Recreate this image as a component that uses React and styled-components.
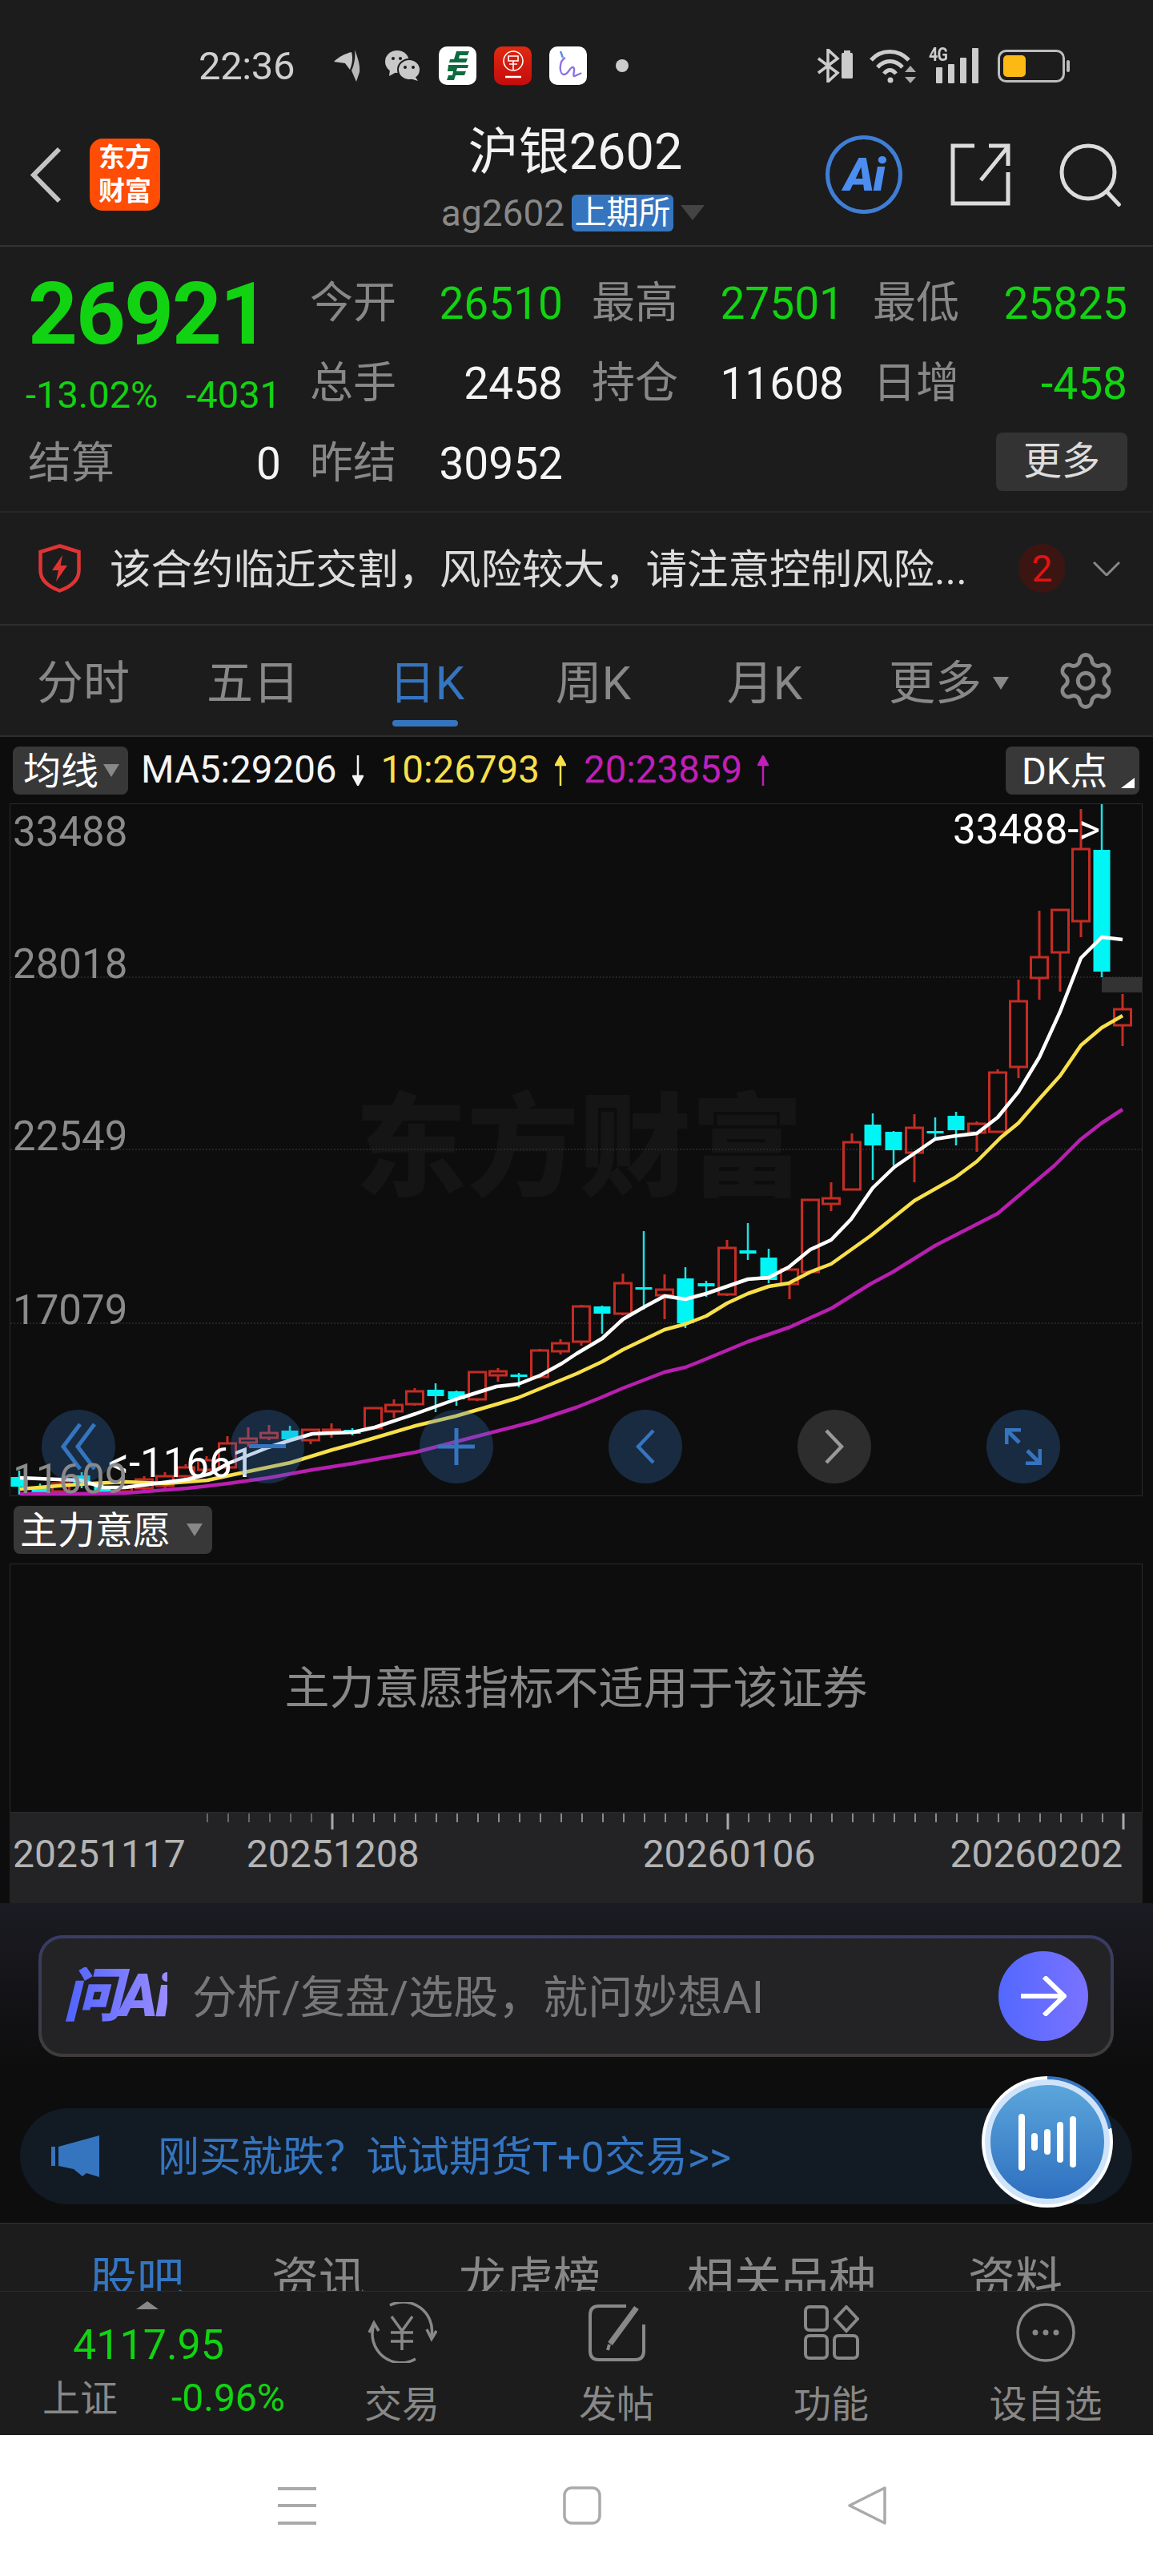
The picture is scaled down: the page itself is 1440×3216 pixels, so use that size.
import React from "react";
import styled, { createGlobalStyle } from "styled-components";
import { Settings } from "lucide-react";

const FONT = `Roboto, "Noto Sans CJK SC", sans-serif`;
const BLUE = "#3575c0";
const GREEN = "#12d312";
const GRAY = "#888888";

const Global = createGlobalStyle`
  * { box-sizing: border-box; }
  html, body { margin: 0; padding: 0; background: #1c1c1c; }
  #root { width: 1440px; height: 3216px; overflow: hidden; }
`;

const Page = styled.div`
  width: 1440px; height: 3216px; display: flex; flex-direction: column;
  background: #1c1c1c; font-family: ${FONT}; color: #fff; line-height: 1; overflow: hidden;
`;

/* ---------- status bar ---------- */
const StatusBar = styled.div`
  height: 130px; flex: none; display: flex; align-items: center;
  padding: 34px 103px 0 248px;
`;
const Time = styled.span`font-size: 49px; color: #cfcfcf; width: 119px; white-space: nowrap; margin-right: 50px; letter-spacing: -.4px;`;
const StatusGroup = styled.div`
  display: flex; align-items: center; gap: ${p => p.$gap}px;
  margin-left: ${p => p.$ml || 0}px;
`;
const AppTile = styled.div`
  width: 47px; height: 48px; border-radius: 10px; background: ${p => p.$bg};
  display: flex; align-items: center; justify-content: center; overflow: hidden;
`;
const Dot = styled.span`width: 16px; height: 16px; border-radius: 50%; background: #ccc; margin-left: 14px;`;
const NetBlock = styled.div`position: relative; width: 61px; height: 44px;`;
const NetLabel = styled.span`
  position: absolute; left: -5px; top: -4px; font-size: 24px; font-weight: 700; color: #ccc;
  letter-spacing: -1px; transform: scaleX(.82); transform-origin: left top;
`;

/* ---------- header ---------- */
const Header = styled.div`
  height: 178px; flex: none; display: grid; grid-template-columns: 1fr auto 1fr;
  align-items: center; padding: 0 40px 0 37px; border-bottom: 2px solid #333;
`;
const HeaderLeft = styled.div`display: flex; align-items: center; gap: 34px;`;
const Logo = styled.div`
  width: 88px; height: 90px; border-radius: 16px; background: #ff4d06; color: #fff;
  display: flex; align-items: center; justify-content: center; text-align: center;
  font-size: 33px; font-weight: 700; line-height: 42px;
`;
const HeaderCenter = styled.div`display: flex; flex-direction: column; align-items: center; gap: 22px; padding-top: 10px;`;
const Title = styled.div`font-size: 63px; color: #f2f2f2; white-space: nowrap;`;
const SubRow = styled.div`display: flex; align-items: center; gap: 9px; margin-left: -6px;`;
const SubCode = styled.span`font-size: 46px; color: ${GRAY};`;
const ExchangeBadge = styled.span`
  width: 127px; height: 46px; border-radius: 6px; background: ${BLUE}; color: #fff;
  font-size: 40px; display: flex; align-items: center; justify-content: center;
`;
const Caret = styled.span`
  display: inline-block; flex: none; width: 0; height: 0;
  border-left: ${p => p.$w / 2}px solid transparent; border-right: ${p => p.$w / 2}px solid transparent;
  border-top: ${p => p.$h}px solid ${p => p.$color || GRAY};
`;
const HeaderRight = styled.div`display: flex; align-items: center; justify-content: flex-end; gap: 60px;`;
const AiCircle = styled.div`
  width: 96px; height: 98px; border-radius: 50%; border: 5px solid #3f7ed6; color: #4b8df0;
  display: flex; align-items: center; justify-content: center;
  font-size: 58px; font-weight: 900; font-style: italic; letter-spacing: -2px;
`;

/* ---------- quote ---------- */
const Quote = styled.div`
  height: 332px; flex: none; display: grid; padding: 21px 0 0 35px;
  grid-template-columns: 316px 316px 315px 318px; column-gap: 36px; grid-auto-rows: 100px;
  border-bottom: 2px solid #262626;
`;
const PriceCell = styled.div`
  display: flex; align-items: center; padding-top: 26px; font-size: 108px; font-weight: 700;
  color: ${GREEN}; letter-spacing: -2px; white-space: nowrap;
`;
const ChangeCell = styled.div`
  display: flex; align-items: center; justify-content: space-between; padding-top: 26px; margin-left: -3px;
  font-size: 47px; color: ${GREEN}; white-space: nowrap;
`;
const StatCell = styled.div`display: flex; align-items: center; justify-content: space-between; white-space: nowrap;`;
const StatLabel = styled.span`font-size: 54px; color: ${GRAY};`;
const StatValue = styled.span`font-size: 55px; color: ${p => p.$color || "#f4f4f4"};`;
const MoreCell = styled.div`grid-column: 4; display: flex; align-items: center; justify-content: flex-end;`;
const MoreButton = styled.div`
  width: 164px; height: 73px; border-radius: 8px; background: #333; color: #ddd; font-size: 48px;
  display: flex; align-items: center; justify-content: center; margin-top: -6px;
`;

/* ---------- alert ---------- */
const Alert = styled.div`
  height: 141px; flex: none; display: flex; align-items: center; padding: 0 41px 0 48px;
  border-bottom: 2px solid #2e2e2e;
`;
const AlertText = styled.span`font-size: 51.5px; color: #ddd; margin: 4px 0 0 36px; white-space: nowrap;`;
const AlertBadge = styled.span`
  width: 59px; height: 61px; border-radius: 50%; background: #3b1512; color: #e31212; font-size: 46px;
  display: flex; align-items: center; justify-content: center; margin-left: auto;
`;
const AlertChevron = styled.svg`margin-left: 34px;`;

/* ---------- period tabs ---------- */
const Tabs = styled.div`
  height: 139px; flex: none; display: grid; align-items: stretch;
  grid-template-columns: 208px 216px 218px 198px 230px 196px 174px; border-bottom: 2px solid #2e2e2e;
`;
const Tab = styled.div`
  position: relative; display: flex; align-items: center; justify-content: center; gap: 14px; padding-top: 6px;
  font-size: 58px; color: ${p => (p.$active ? BLUE : GRAY)};
  ${p => p.$active && `&::after {
    content: ""; position: absolute; bottom: 11px; left: 66px; width: 82px; height: 8px;
    border-radius: 4px; background: ${BLUE};
  }`}
`;
const MoreTab = styled(Tab)`justify-content: flex-start; padding-left: 40px;`;
const GearSlot = styled.div`display: flex; align-items: center; justify-content: flex-start; padding-left: 51px;`;

/* ---------- chart ---------- */
const ChartArea = styled.div`flex: none; background: #0d0d0d; display: flex; flex-direction: column;`;
const ChartToolbar = styled.div`
  height: ${p => p.$h}px; display: flex; align-items: flex-start; padding: 12px 17px 0 ${p => p.$pl}px;
`;
const Pill = styled.div`
  position: relative; height: 60px; border-radius: 8px; background: #383838; color: #fff; font-size: 47px;
  display: flex; align-items: center; gap: ${p => p.$gap || 6}px; padding: 0 0 0 ${p => p.$pl || 13}px; width: ${p => p.$w}px; flex: none;
`;
const PillCorner = styled.span`
  position: absolute; right: 6px; bottom: 8px; width: 0; height: 0;
  border-left: 17px solid transparent; border-bottom: 13px solid #fff;
`;
const Legend = styled.div`display: flex; align-items: center; gap: 22px; margin-left: 16px; height: 60px; flex: 1;`;
const LegendItem = styled.span`
  display: flex; align-items: center; gap: 19px; font-size: 47.5px; color: ${p => p.$color}; white-space: nowrap;
`;
const ChartBox = styled.div`
  position: relative; height: ${p => p.$h}px; margin: 0 13px 0 12px; border: 1px solid #2a2a2a;
  overflow: ${p => (p.$clip ? "hidden" : "visible")};
`;
const ChartSvg = styled.svg`position: relative; display: block;`;
const Watermark = styled.div`
  position: absolute; left: 430px; top: 360px; font-size: 140px; font-weight: 900; color: #151515; white-space: nowrap;
`;
const AxisLabel = styled.span`
  position: absolute; left: 3px; top: ${p => p.$top}px; font-size: 51px; color: #8a8a8a;
`;
const PriceMark = styled.span`
  position: absolute; left: ${p => p.$left}px; top: ${p => p.$top}px; font-size: 51px; color: #fff; white-space: nowrap;
`;
const OverlayButtons = styled.div`position: absolute; left: 39px; top: 756px; display: flex; gap: 144px;`;
const RoundButton = styled.div`
  width: 92px; height: 92px; border-radius: 50%; display: flex; align-items: center; justify-content: center;
  background: ${p => (p.$gray ? "rgba(128,128,128,.28)" : "rgba(53,117,192,.29)")};
`;
const EmptyBox = styled(ChartBox)`display: flex; align-items: center; justify-content: center; font-size: 56px; color: ${GRAY};`;
const DateStrip = styled.div`height: 113px; margin: 0 13px 0 12px; background: #232325;`;
const TickSvg = styled.svg`display: block;`;
const DateRow = styled.div`display: flex; margin-top: 4px;`;
const DateLabel = styled.span`font-size: 48px; color: #b4b4b4; margin-left: ${p => p.$ml}px; white-space: nowrap;`;

/* ---------- AI area ---------- */
const AiArea = styled.div`
  position: relative; height: 399px; flex: none; padding-top: 40px;
  background: linear-gradient(180deg, #1b1b23 0%, #0d0d0d 52%, #0d0d0d 100%);
`;
const AskBar = styled.div`
  height: 152px; margin: 0 49px 0 48px; border: 4px solid transparent; border-radius: 30px;
  background: linear-gradient(#232326, #232326) padding-box, linear-gradient(180deg, #383c66, #403c3c) border-box;
  display: flex; align-items: center; padding: 0 28px 0 27px;
`;
const AskLogo = styled.span`
  width: 130px; flex: none; font-size: 73px; font-weight: 900; font-style: italic; letter-spacing: -3px; white-space: nowrap;
  background: linear-gradient(90deg, #4f63ff, #9a8cff); -webkit-background-clip: text; background-clip: text; color: transparent;
`;
const AskText = styled.span`font-size: 56px; color: #777; margin: 4px 0 0 31px; white-space: nowrap; flex: 1;`;
const SendButton = styled.div`
  width: 112px; height: 112px; border-radius: 50%; flex: none;
  background: linear-gradient(90deg, #5368ff, #7a72ff); display: flex; align-items: center; justify-content: center;
`;
const Promo = styled.div`
  height: 120px; margin: 64px 26px 0 25px; border-radius: 60px; background: #121a24;
  display: flex; align-items: center; padding-left: 39px;
`;
const PromoText = styled.span`font-size: 52px; color: ${BLUE}; margin: 4px 0 0 73px; white-space: nowrap;`;
const VoiceOuter = styled.div`
  position: absolute; right: 50px; top: 216px; width: 164px; height: 164px; border-radius: 50%; padding: 4px;
  background: conic-gradient(${BLUE} 0deg 78deg, #fff 78deg 360deg);
`;
const VoiceInner = styled.div`
  width: 100%; height: 100%; border-radius: 50%; border: 7px solid #cfe4fa;
  background: linear-gradient(180deg, #5ba6dc, #2e6fbf);
  display: flex; align-items: center; justify-content: center; gap: 8px;
`;
const VoiceBar = styled.span`width: 8px; height: ${p => p.$h}px; border-radius: 4px; background: #fff;`;

/* ---------- bottom ---------- */
const SectionTabs = styled.div`
  height: 85px; flex: none; overflow: hidden; border-top: 1px solid #333; background: #1c1c1c;
  display: flex; padding: 41px 0 0 112px; font-size: 59px; color: ${GRAY};
`;
const SectionTab = styled.span`
  color: ${p => (p.$active ? BLUE : GRAY)}; white-space: nowrap; margin-left: ${p => p.$ml || 0}px;
`;
const BottomNav = styled.div`
  height: 180px; flex: none; border-top: 1px solid #2c2c2c; display: grid;
  grid-template-columns: 368px repeat(4, 268px);
`;
const IndexCell = styled.div`display: flex; flex-direction: column; padding: 12px 12px 0 53px;`;
const UpCaret = styled.span`
  width: 0; height: 0; align-self: flex-start; margin-left: 117px;
  border-left: 14px solid transparent; border-right: 14px solid transparent; border-bottom: 10px solid ${GRAY};
`;
const IndexPrice = styled.div`font-size: 52px; color: ${GREEN}; margin: 19px 0 0 38px; white-space: nowrap;`;
const IndexRow = styled.div`display: flex; align-items: center; justify-content: space-between; margin-top: 16px;`;
const IndexName = styled.span`font-size: 47px; color: ${GRAY};`;
const IndexChange = styled.span`font-size: 48px; color: ${GREEN};`;
const NavItem = styled.div`display: flex; flex-direction: column; align-items: center; padding-top: 12px;`;
const NavIconBox = styled.div`height: 78px; display: flex; align-items: center; justify-content: center;`;
const NavLabel = styled.span`font-size: 47px; color: ${GRAY}; margin-top: 27px; white-space: nowrap;`;
const SystemNav = styled.div`
  height: 176px; flex: none; background: #fff; display: flex; align-items: center; gap: 308px; padding-left: 347px;
`;

/* ---------- data ---------- */
const R = "r", C = "c";
const candles = [
  [24, 1836, 1866, 1844, 1855, C], [50, 1852, 1866, 1857, 1863, C], [76, 1846, 1866, 1852, 1862, R],
  [102, 1838, 1858, 1842, 1852, C], [128, 1850, 1866, 1855, 1862, C], [154, 1853, 1866, 1857, 1862, R],
  [180, 1843, 1861, 1847, 1858, R], [206, 1838, 1858, 1843, 1855, R], [232, 1828, 1846, 1832, 1843, R],
  [258, 1818, 1838, 1823, 1835, R], [284, 1793, 1836, 1802, 1832, R], [310, 1782, 1806, 1796, 1801, R],
  [336, 1779, 1798, 1789, 1795, R], [362, 1780, 1800, 1786, 1796, C], [388, 1785, 1803, 1785, 1798, R],
  [414, 1777, 1795, 1785, 1788, R], [440, 1783, 1792, 1785, 1789, C], [466, 1757, 1785, 1758, 1783, R],
  [492, 1747, 1770, 1754, 1762, R], [518, 1733, 1755, 1737, 1753, R], [544, 1727, 1763, 1735, 1742, C],
  [570, 1736, 1755, 1737, 1746, C], [596, 1712, 1749, 1713, 1747, R], [622, 1708, 1725, 1712, 1717, R],
  [648, 1714, 1732, 1716, 1718, C], [674, 1684, 1721, 1686, 1719, R], [700, 1672, 1691, 1677, 1687, R],
  [726, 1629, 1680, 1631, 1675, R], [752, 1630, 1665, 1631, 1639, C], [778, 1590, 1642, 1602, 1640, R],
  [804, 1537, 1635, 1607, 1609, C], [830, 1591, 1647, 1610, 1617, R], [856, 1582, 1658, 1596, 1651, C],
  [882, 1599, 1619, 1602, 1605, C], [908, 1548, 1618, 1558, 1616, R], [934, 1527, 1573, 1561, 1564, C],
  [960, 1559, 1602, 1570, 1597, C], [986, 1585, 1622, 1585, 1603, R], [1012, 1497, 1589, 1498, 1588, R],
  [1038, 1476, 1512, 1496, 1503, R], [1064, 1415, 1486, 1426, 1485, R], [1090, 1390, 1473, 1404, 1429, C],
  [1116, 1412, 1455, 1413, 1435, C], [1142, 1391, 1476, 1408, 1439, R], [1168, 1395, 1422, 1412, 1414, C],
  [1194, 1388, 1430, 1393, 1410, C], [1220, 1400, 1438, 1403, 1414, R], [1246, 1335, 1414, 1339, 1413, R],
  [1272, 1223, 1346, 1250, 1332, R], [1298, 1137, 1248, 1195, 1221, R], [1324, 1136, 1238, 1136, 1189, R],
  [1350, 1010, 1170, 1060, 1150, R], [1376, 1004, 1220, 1061, 1212, C], [1402, 1241, 1306, 1260, 1280, R],
];
const white = "25,1845 73,1847 101,1848 129,1857 156,1857 234,1847 262,1840 285,1827 335,1807 363,1798 390,1790 441,1788 468,1782 519,1765 569,1747 620,1731 647,1728 675,1717 702,1702 720,1690 752,1671 778,1647 804,1632 830,1618 856,1622 882,1615 908,1606 934,1597 960,1595 985,1582 1012,1560 1038,1548 1063,1522 1090,1483 1117,1457 1168,1422 1194,1418 1220,1415 1246,1395 1272,1363 1298,1320 1324,1263 1350,1196 1376,1170 1402,1173";
const yellow = "25,1859 73,1855 115,1852 156,1850 207,1852 259,1848 310,1837 363,1826 415,1810 441,1803 519,1780 569,1768 624,1752 647,1745 720,1715 752,1700 778,1685 830,1660 856,1653 882,1643 908,1627 934,1615 960,1606 985,1602 1012,1588 1038,1578 1087,1543 1142,1499 1193,1470 1220,1450 1250,1420 1272,1402 1298,1372 1324,1343 1350,1305 1376,1283 1402,1268";
const magenta = "25,1865 92,1865 156,1864 234,1858 285,1852 335,1845 390,1835 441,1827 491,1818 519,1813 569,1800 666,1775 720,1757 750,1745 778,1733 830,1713 856,1707 881,1697 934,1675 986,1657 1039,1633 1087,1603 1115,1588 1168,1555 1246,1515 1317,1455 1349,1423 1376,1402 1402,1385";

/* ---------- drawings ---------- */
const LegendArrow = ({ color, down }) => (
  <svg width="14" height="38" viewBox="0 0 14 38">
    {down ? (
      <path d="M7 0V36M1 26L7 37L13 26Z" stroke={color} strokeWidth="2.5" fill={color} />
    ) : (
      <path d="M7 38V2M1 12L7 1L13 12Z" stroke={color} strokeWidth="2.5" fill={color} />
    )}
  </svg>
);

const Chart = () => (
  <ChartSvg width="1413" height="863" viewBox="13 1004 1413 863">
    {[1220, 1435, 1652].map(y => (
      <line key={y} x1="13" x2="1426" y1={y} y2={y} stroke="#2c2c2c" strokeWidth="1.5" strokeDasharray="2 2" />
    ))}
    <rect x="1376" y="1220" width="51" height="19" fill="#333" />
    {candles.map(([x, hi, lo, top, bot, kind]) =>
      kind === R ? (
        <g key={x} stroke="#c42c24" strokeWidth="3" fill="none">
          <line x1={x} x2={x} y1={hi} y2={top} />
          <line x1={x} x2={x} y1={bot} y2={lo} />
          <rect x={x - 10.5} y={top} width="21" height={bot - top} />
        </g>
      ) : (
        <g key={x}>
          <line x1={x} x2={x} y1={hi} y2={lo} stroke="#1fe0e0" strokeWidth="2.5" />
          <rect x={x - 10.5} y={top} width="21" height={bot - top + 1} fill="#00f5f5" />
        </g>
      )
    )}
    <polyline points={magenta} fill="none" stroke="#b81fb0" strokeWidth="4.5" strokeLinejoin="round" />
    <polyline points={yellow} fill="none" stroke="#f8e04c" strokeWidth="4.5" strokeLinejoin="round" />
    <polyline points={white} fill="none" stroke="#fff" strokeWidth="4.5" strokeLinejoin="round" />
  </ChartSvg>
);

const Ticks = () => (
  <TickSvg width="1415" height="24" viewBox="12 2263 1415 24">
    {Array.from({ length: 45 }, (_, i) => {
      const x = 259 + 26 * i;
      const long = i === 6 || i === 25 || i === 44;
      return (
        <line key={i} x1={x} x2={x} y1="2264" y2={long ? 2284 : 2275}
          stroke={long ? "#a8a8a8" : i < 6 ? "#666" : "#8a8a8a"} strokeWidth={long ? 3 : 2} />
      );
    })}
  </TickSvg>
);

export default function App() {
  return (
    <Page>
      <Global />
      <StatusBar>
        <Time>22:36</Time>
        <StatusGroup $gap={30}>
          <svg width="33" height="40" viewBox="0 0 33 40">
            <path d="M26 0C30 10 33 20 32 28L28 40L22 26C26 18 27 8 26 0Z" fill="#b8b8b8" />
            <path d="M22 3C24 10 23 18 20 25L14 17L0 15C6 9 14 5 22 3Z" fill="#c8c8c8" />
          </svg>
          <svg width="45" height="38" viewBox="0 0 45 38">
            <ellipse cx="16" cy="14" rx="15" ry="14" fill="#c8c8c8" />
            <path d="M7 24L6 32L15 27Z" fill="#c8c8c8" />
            <ellipse cx="31" cy="24" rx="14" ry="13" fill="#c8c8c8" stroke="#1c1c1c" strokeWidth="2" />
            <path d="M38 32L42 38L32 35Z" fill="#c8c8c8" />
            <circle cx="11" cy="10" r="2" fill="#1c1c1c" /><circle cx="20" cy="10" r="2" fill="#1c1c1c" />
            <circle cx="26" cy="21" r="2" fill="#1c1c1c" /><circle cx="36" cy="21" r="2" fill="#1c1c1c" />
          </svg>
          <StatusGroup $gap={22} $ml={-7}>
            <AppTile $bg="#fff">
              <svg width="28" height="36" viewBox="0 0 28 36" fill="#0d6b3f">
                <path d="M12 0H28L26 5H16L15 9H26L24 14H3L4 10H9ZM2 17H27L26 21H13L12 25H24L22 30H11L9 36H0L2 30H7L8 25H1Z" />
              </svg>
            </AppTile>
            <AppTile $bg="linear-gradient(180deg,#e02a10,#c40c0c)">
              <svg width="30" height="38" viewBox="0 0 30 38" fill="none" stroke="#fff" strokeWidth="1.6">
                <circle cx="15" cy="13" r="12" />
                <path d="M9 7H21V13H9ZM15 13V24M10 17H20" />
                <line x1="5" y1="33" x2="25" y2="33" strokeWidth="2.5" />
              </svg>
            </AppTile>
            <AppTile $bg="#fff">
              <svg width="36" height="40" viewBox="0 0 36 40" fill="none" strokeWidth="2.4">
                <path d="M8 2L11 10" stroke="#5a8ce8" />
                <path d="M14 10C6 14 6 30 12 31C18 32 20 20 24 22C28 25 20 36 28 32C30 31 33 30 34 29" stroke="#8a72e8" />
              </svg>
            </AppTile>
            <Dot />
          </StatusGroup>
        </StatusGroup>
        <StatusGroup $gap={20} $ml={236}>
          <svg width="44" height="42" viewBox="0 0 44 42" fill="none">
            <path d="M1 12L25 30L13 41V1L25 12L1 30" stroke="#ccc" strokeWidth="3.5" />
            <rect x="30" y="5" width="14" height="32" rx="1.5" fill="#ccc" />
            <rect x="33" y="2" width="8" height="4" fill="#ccc" />
          </svg>
          <svg width="60" height="45" viewBox="0 0 60 45" fill="none" stroke="#ccc" strokeWidth="5">
            <path d="M3 15C15 1 37 1 50 15" />
            <path d="M11 24C20 14 33 14 42 24" />
            <path d="M19 32C24 26 29 26 34 32" />
            <circle cx="27" cy="40" r="3.5" fill="#ccc" stroke="none" />
            <path d="M45 30L52 22L59 30ZM45 36L59 36L52 44Z" fill="#aaa" stroke="none" />
          </svg>
          <NetBlock>
            <NetLabel>4G</NetLabel>
            <svg width="61" height="44" viewBox="0 0 61 44" fill="#ccc">
              <rect x="4" y="24" width="8" height="20" rx="1" />
              <rect x="19" y="20" width="8" height="24" rx="1" />
              <rect x="34" y="12" width="8" height="32" rx="1" />
              <rect x="49" y="0" width="8" height="44" rx="1" />
            </svg>
          </NetBlock>
          <svg width="90" height="41" viewBox="0 0 90 41">
            <rect x="1.5" y="1.5" width="81" height="38" rx="9" fill="none" stroke="#bdbdbd" strokeWidth="3" />
            <rect x="7" y="7" width="28" height="27" rx="5" fill="#fdb913" />
            <rect x="86" y="13" width="4" height="15" rx="2" fill="#bdbdbd" />
          </svg>
        </StatusGroup>
      </StatusBar>

      <Header>
        <HeaderLeft>
          <svg width="41" height="71" viewBox="0 0 41 71" fill="none">
            <path d="M37 3L5 35.5L37 68" stroke="#c4c4c4" strokeWidth="6" />
          </svg>
          <Logo>东方<br />财富</Logo>
        </HeaderLeft>
        <HeaderCenter>
          <Title>沪银2602</Title>
          <SubRow>
            <SubCode>ag2602</SubCode>
            <ExchangeBadge>上期所</ExchangeBadge>
            <Caret $w={30} $h={19} $color="#444" />
          </SubRow>
        </HeaderCenter>
        <HeaderRight>
          <AiCircle>Ai</AiCircle>
          <svg width="75" height="78" viewBox="0 0 75 78" fill="none" stroke="#dcdcdc" strokeWidth="5">
            <path d="M30 3H3V75H72V36" />
            <path d="M38 46L72 4M48 3H72V28" />
          </svg>
          <svg width="78" height="79" viewBox="0 0 78 79" fill="none" stroke="#dcdcdc" strokeWidth="5">
            <circle cx="37" cy="36" r="33" />
            <path d="M60 60L77 78" />
          </svg>
        </HeaderRight>
      </Header>

      <Quote>
        <PriceCell>26921</PriceCell>
        <StatCell><StatLabel>今开</StatLabel><StatValue $color={GREEN}>26510</StatValue></StatCell>
        <StatCell><StatLabel>最高</StatLabel><StatValue $color={GREEN}>27501</StatValue></StatCell>
        <StatCell><StatLabel>最低</StatLabel><StatValue $color={GREEN}>25825</StatValue></StatCell>
        <ChangeCell><span>-13.02%</span><span>-4031</span></ChangeCell>
        <StatCell><StatLabel>总手</StatLabel><StatValue>2458</StatValue></StatCell>
        <StatCell><StatLabel>持仓</StatLabel><StatValue>11608</StatValue></StatCell>
        <StatCell><StatLabel>日增</StatLabel><StatValue $color={GREEN}>-458</StatValue></StatCell>
        <StatCell><StatLabel>结算</StatLabel><StatValue>0</StatValue></StatCell>
        <StatCell><StatLabel>昨结</StatLabel><StatValue>30952</StatValue></StatCell>
        <MoreCell><MoreButton>更多</MoreButton></MoreCell>
      </Quote>

      <Alert>
        <svg width="53" height="61" viewBox="0 0 53 61" fill="none">
          <path d="M26.5 2.5L50.5 10V33C50.5 46 39 54 26.5 58.5C14 54 2.5 46 2.5 33V10Z" stroke="#e03434" strokeWidth="4.5" />
          <path d="M30 14L17 33H25L22 47L36 27H27.5Z" fill="#e03434" />
        </svg>
        <AlertText>该合约临近交割，风险较大，请注意控制风险...</AlertText>
        <AlertBadge>2</AlertBadge>
        <AlertChevron width="34" height="18" viewBox="0 0 34 18" fill="none">
          <path d="M1 1L17 17L33 1" stroke="#888" strokeWidth="3" />
        </AlertChevron>
      </Alert>

      <Tabs>
        <Tab>分时</Tab>
        <Tab>五日</Tab>
        <Tab $active>日K</Tab>
        <Tab>周K</Tab>
        <Tab>月K</Tab>
        <MoreTab>更多<Caret $w={20} $h={16} /></MoreTab>
        <GearSlot><Settings size={78} color="#888" strokeWidth={1.5} /></GearSlot>
      </Tabs>

      <ChartArea>
        <ChartToolbar $h={83} $pl={16}>
          <Pill $w={144}>均线<Caret $w={20} $h={16} /></Pill>
          <Legend>
            <LegendItem $color="#f4f4f4">MA5:29206<LegendArrow color="#f4f4f4" down /></LegendItem>
            <LegendItem $color="#f8e04c">10:26793<LegendArrow color="#f8e04c" /></LegendItem>
            <LegendItem $color="#c01fb8">20:23859<LegendArrow color="#c01fb8" /></LegendItem>
          </Legend>
          <Pill $w={167} $pl={20}>DK点<PillCorner /></Pill>
        </ChartToolbar>
        <ChartBox $h={865} $clip>
          <Watermark>东方财富</Watermark>
          <Chart />
          <AxisLabel $top={9}>33488</AxisLabel>
          <AxisLabel $top={174}>28018</AxisLabel>
          <AxisLabel $top={389}>22549</AxisLabel>
          <AxisLabel $top={606}>17079</AxisLabel>
          <PriceMark $left={1177} $top={6}>33488-&gt;</PriceMark>
          <PriceMark $left={122} $top={797}>&lt;-11661</PriceMark>
          <OverlayButtons>
            <RoundButton>
              <svg width="44" height="60" viewBox="0 0 44 60" fill="none" stroke={BLUE} strokeWidth="5">
                <path d="M24 2L3 30L24 58M42 2L21 30L42 58" />
              </svg>
            </RoundButton>
            <RoundButton>
              <svg width="46" height="6" viewBox="0 0 46 6"><rect width="46" height="5" fill={BLUE} /></svg>
            </RoundButton>
            <RoundButton>
              <svg width="46" height="46" viewBox="0 0 46 46" fill={BLUE}><rect y="20.5" width="46" height="5" /><rect x="20.5" width="5" height="46" /></svg>
            </RoundButton>
            <RoundButton>
              <svg width="24" height="44" viewBox="0 0 24 44" fill="none" stroke={BLUE} strokeWidth="4.5"><path d="M22 2L3 22L22 42" /></svg>
            </RoundButton>
            <RoundButton $gray>
              <svg width="24" height="44" viewBox="0 0 24 44" fill="none" stroke="#9a9a9a" strokeWidth="4.5"><path d="M2 2L21 22L2 42" /></svg>
            </RoundButton>
            <RoundButton>
              <svg width="46" height="46" viewBox="0 0 46 46" fill="none" stroke={BLUE} strokeWidth="5">
                <path d="M2 20V2H20M3 3L18 18M44 26V44H26M43 43L28 28" />
              </svg>
            </RoundButton>
          </OverlayButtons>
          <AxisLabel $top={817}>11609</AxisLabel>
        </ChartBox>
        <ChartToolbar $h={84} $pl={17}>
          <Pill $w={248} $gap={20} $pl={8}>主力意愿<Caret $w={20} $h={16} /></Pill>
        </ChartToolbar>
        <EmptyBox $h={311}>主力意愿指标不适用于该证券</EmptyBox>
        <DateStrip>
          <Ticks />
          <DateRow>
            <DateLabel $ml={4}>20251117</DateLabel>
            <DateLabel $ml={76}>20251208</DateLabel>
            <DateLabel $ml={279}>20260106</DateLabel>
            <DateLabel $ml={168}>20260202</DateLabel>
          </DateRow>
        </DateStrip>
      </ChartArea>

      <AiArea>
        <AskBar>
          <AskLogo>问Ai</AskLogo>
          <AskText>分析/复盘/选股，就问妙想AI</AskText>
          <SendButton>
            <svg width="58" height="50" viewBox="0 0 58 50" fill="none" stroke="#fff" strokeWidth="6">
              <path d="M1 25H55M30 1L55 25L30 49" />
            </svg>
          </SendButton>
        </AskBar>
        <Promo>
          <svg width="60" height="52" viewBox="0 0 60 52" fill={BLUE}>
            <rect x="0" y="14" width="5" height="24" />
            <path d="M9 14L60 0V52L44 47L39 51L28 42L9 38Z" />
          </svg>
          <PromoText>刚买就跌？试试期货T+0交易&gt;&gt;</PromoText>
        </Promo>
        <VoiceOuter>
          <VoiceInner>
            <VoiceBar $h={71} />
            <VoiceBar $h={22} />
            <VoiceBar $h={32} />
            <VoiceBar $h={51} />
            <VoiceBar $h={64} />
          </VoiceInner>
        </VoiceOuter>
      </AiArea>

      <SectionTabs>
        <SectionTab $active>股吧</SectionTab>
        <SectionTab $ml={109}>资讯</SectionTab>
        <SectionTab $ml={116}>龙虎榜</SectionTab>
        <SectionTab $ml={108}>相关品种</SectionTab>
        <SectionTab $ml={115}>资料</SectionTab>
      </SectionTabs>

      <BottomNav>
        <IndexCell>
          <UpCaret />
          <IndexPrice>4117.95</IndexPrice>
          <IndexRow><IndexName>上证</IndexName><IndexChange>-0.96%</IndexChange></IndexRow>
        </IndexCell>
        <NavItem>
          <NavIconBox>
            <svg width="87" height="76" viewBox="0 0 87 76" fill="none" stroke="#888" strokeWidth="3.5">
              <path d="M28 4A36 36 0 0 1 80 42" />
              <path d="M74 34L80 46L86 36" />
              <path d="M8 28A36 36 0 0 0 60 71" />
              <path d="M2 38L8 26L14 36" />
              <path d="M30 18L43 36L56 18M43 36V60M29 38H57M29 49H57" />
            </svg>
          </NavIconBox>
          <NavLabel>交易</NavLabel>
        </NavItem>
        <NavItem>
          <NavIconBox>
            <svg width="73" height="73" viewBox="0 0 73 73" fill="none" stroke="#888" strokeWidth="4">
              <path d="M48 3H14Q3 3 3 14V59Q3 70 14 70H59Q70 70 70 59V26" />
              <path d="M28 50L61 5" strokeWidth="7" />
              <path d="M27 51L25 58" />
            </svg>
          </NavIconBox>
          <NavLabel>发帖</NavLabel>
        </NavItem>
        <NavItem>
          <NavIconBox>
            <svg width="69" height="68" viewBox="0 0 69 68" fill="none" stroke="#888" strokeWidth="4">
              <rect x="2" y="2" width="27" height="29" rx="5" />
              <path d="M53 2L67 17L53 32L39 17Z" />
              <rect x="2" y="38" width="27" height="28" rx="5" />
              <rect x="38" y="38" width="29" height="28" rx="5" />
            </svg>
          </NavIconBox>
          <NavLabel>功能</NavLabel>
        </NavItem>
        <NavItem>
          <NavIconBox>
            <svg width="74" height="74" viewBox="0 0 74 74" fill="none" stroke="#888" strokeWidth="3.5">
              <circle cx="37" cy="37" r="35" />
              <circle cx="24" cy="37" r="3.5" fill="#888" stroke="none" />
              <circle cx="37" cy="37" r="3.5" fill="#888" stroke="none" />
              <circle cx="50" cy="37" r="3.5" fill="#888" stroke="none" />
            </svg>
          </NavIconBox>
          <NavLabel>设自选</NavLabel>
        </NavItem>
      </BottomNav>

      <SystemNav>
        <svg width="48" height="50" viewBox="0 0 48 50" fill="#aaa">
          <rect y="2" width="48" height="4" /><rect y="23" width="48" height="4" /><rect y="45" width="48" height="4" />
        </svg>
        <svg width="48" height="48" viewBox="0 0 48 48" fill="none" stroke="#aaa" strokeWidth="3.5">
          <rect x="2" y="2" width="44" height="44" rx="9" />
        </svg>
        <svg width="48" height="48" viewBox="0 0 48 48" fill="none" stroke="#aaa" strokeWidth="3.5" strokeLinejoin="round">
          <path d="M46 2V46L2 24Z" />
        </svg>
      </SystemNav>
    </Page>
  );
}
